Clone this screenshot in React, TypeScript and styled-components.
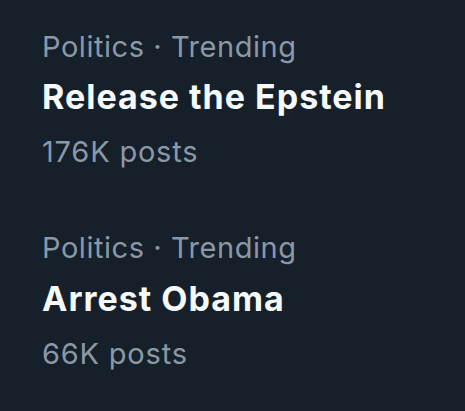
import React from "react";
import styled, { createGlobalStyle } from "styled-components";

const Global = createGlobalStyle`
  html, body { margin: 0; padding: 0; background: #15202b; }
  body { font-family: Inter, "Noto Sans", sans-serif; -webkit-font-smoothing: antialiased; }
`;

const Page = styled.div`
  width: 465px;
  height: 411px;
  background: #15202b;
  box-sizing: border-box;
  padding: 26.5px 0 0 42px;
  display: flex;
  flex-direction: column;
  gap: 56px;
`;

const Trend = styled.div`
  display: flex;
  flex-direction: column;
`;

const Meta = styled.div`
  color: #8b98a5;
  font-size: 29px;
  letter-spacing: 0.55px;
  line-height: 40px;
  font-weight: 400;
  margin-bottom: 10.5px;
`;

const Title = styled.div`
  color: #f7f9f9;
  font-size: 34px;
  font-weight: 700;
  letter-spacing: 1px;
  line-height: 40px;
  margin-bottom: 15px;
`;

const Count = styled.div`
  color: #8b98a5;
  font-size: 29px;
  letter-spacing: 0.8px;
  line-height: 40px;
`;

const trends = [
  { title: "Release the Epstein", count: "176K posts" },
  { title: "Arrest Obama", count: "66K posts" },
];

export default function App() {
  return (
    <>
      <Global />
      <Page>
        {trends.map((t) => (
          <Trend key={t.title}>
            <Meta>Politics · Trending</Meta>
            <Title>{t.title}</Title>
            <Count>{t.count}</Count>
          </Trend>
        ))}
      </Page>
    </>
  );
}
